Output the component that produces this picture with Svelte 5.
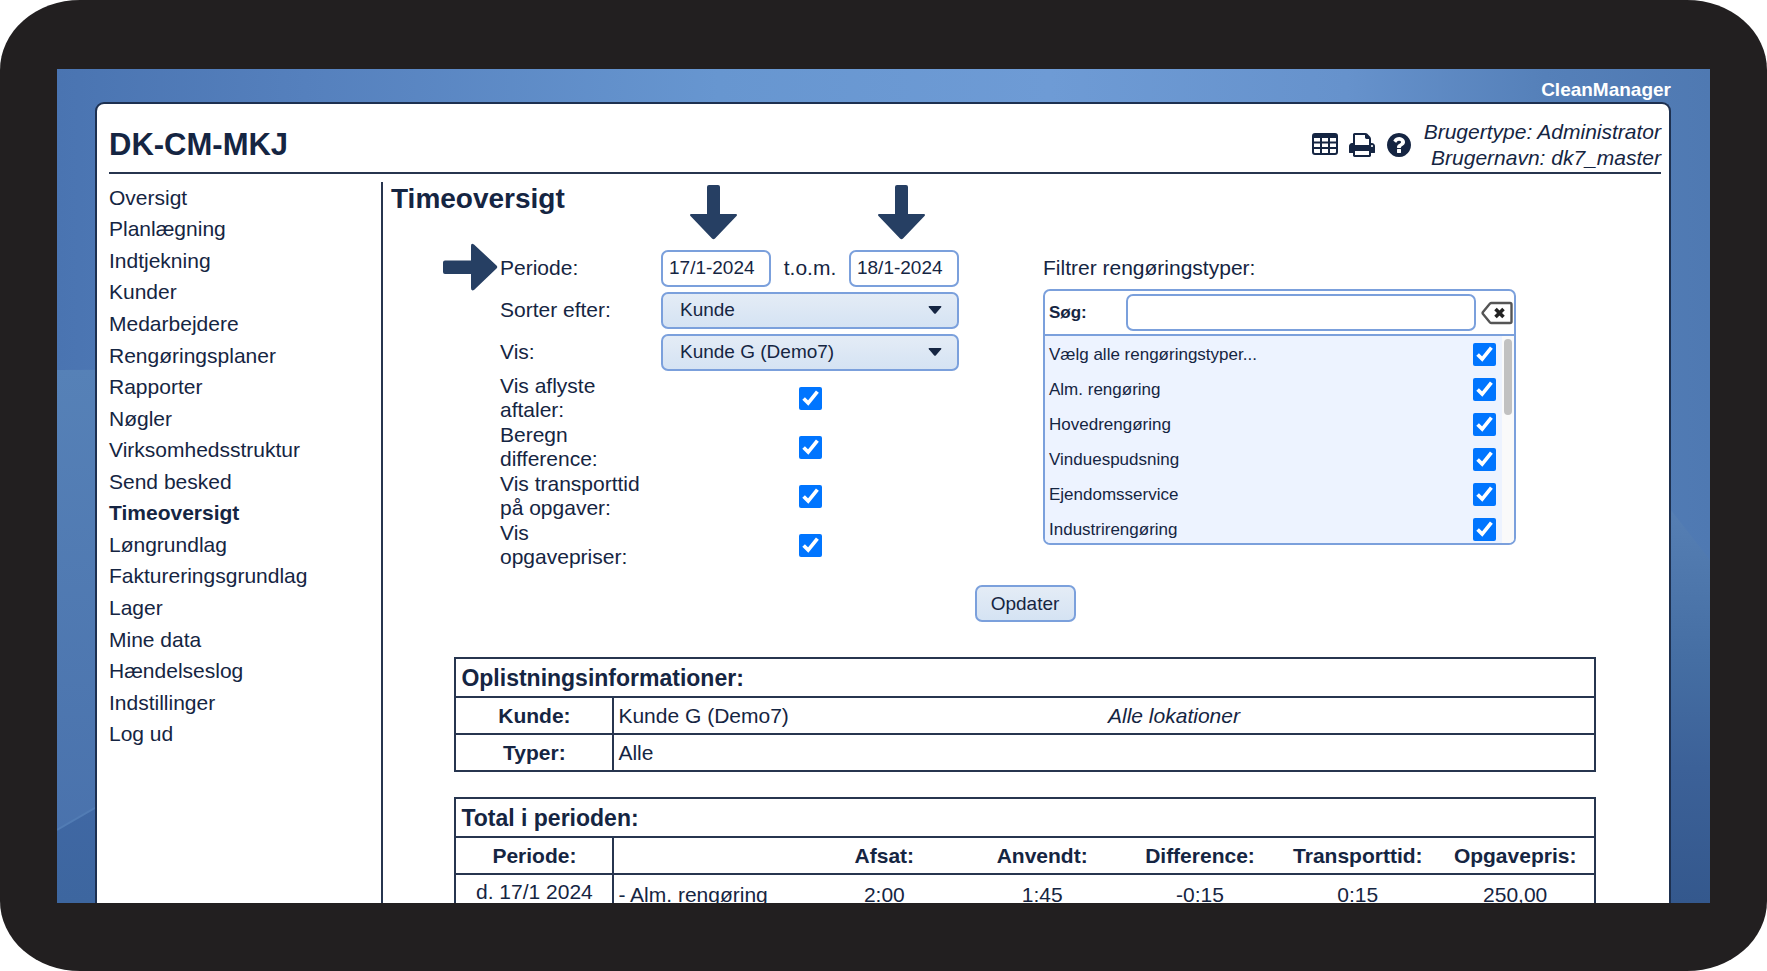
<script>
	const menu = [
		"Oversigt", "Planlægning", "Indtjekning", "Kunder", "Medarbejdere", "Rengøringsplaner",
		"Rapporter", "Nøgler", "Virksomhedsstruktur", "Send besked", "Timeoversigt", "Løngrundlag",
		"Faktureringsgrundlag", "Lager", "Mine data", "Hændelseslog", "Indstillinger", "Log ud",
	];
	const active = "Timeoversigt";

	let from = $state("17/1-2024");
	let to = $state("18/1-2024");
	let search = $state("");

	let options = $state([
		{ id: "cancelled", label: "Vis aflyste aftaler:", on: true },
		{ id: "difference", label: "Beregn difference:", on: true },
		{ id: "transport", label: "Vis transporttid på opgaver:", on: true },
		{ id: "prices", label: "Vis opgavepriser:", on: true },
	]);

	let types = $state([
		{ label: "Vælg alle rengøringstyper...", on: true },
		{ label: "Alm. rengøring", on: true },
		{ label: "Hovedrengøring", on: true },
		{ label: "Vinduespudsning", on: true },
		{ label: "Ejendomsservice", on: true },
		{ label: "Industrirengøring", on: true },
	]);

	// the first entry toggles all the others
	function toggleType(i) {
		if (i !== 0) return;
		for (const t of types) t.on = types[0].on;
	}

	const columns = ["Afsat:", "Anvendt:", "Difference:", "Transporttid:", "Opgavepris:"];
	const totals = [
		{ date: "d. 17/1 2024", type: "- Alm. rengøring", values: ["2:00", "1:45", "-0:15", "0:15", "250,00"] },
	];
</script>

{#snippet downArrow()}
	<svg class="arrow down" viewBox="0 0 49 56" aria-hidden="true">
		<path d="M20 1h9q2 0 2 2v27h15.500q2.500 0 1 2L26 54.500q-1.500 1.500-3 0L1.500 32q-1.500-2 1-2H18V3q0-2 2-2z" />
	</svg>
{/snippet}

{#snippet caret()}
	<svg class="caret" viewBox="0 0 14 8" aria-hidden="true"><path d="M1.500 0h11q1.500 0 .6 1.300L8 7.200q-1 1-2 0L.9 1.300Q0 0 1.500 0z" /></svg>
{/snippet}

<div class="device">
	<div class="screen">
		<svg class="backdrop" viewBox="0 0 1653 834" preserveAspectRatio="none" aria-hidden="true">
			<defs>
				<linearGradient id="top">
					<stop offset="0" stop-color="#4a74b1" />
					<stop offset=".15" stop-color="#5580bd" />
					<stop offset=".4" stop-color="#6796d0" />
					<stop offset=".6" stop-color="#6e9bd5" />
					<stop offset=".78" stop-color="#6692cc" />
					<stop offset=".9" stop-color="#5580b9" />
					<stop offset="1" stop-color="#4f79b2" />
				</linearGradient>
				<linearGradient id="left" x2="0" y2="1">
					<stop offset="0" stop-color="#5681b7" />
					<stop offset="1" stop-color="#4870ab" />
				</linearGradient>
				<linearGradient id="corner" x2="0" y2="1">
					<stop offset="0" stop-color="#4269a8" />
					<stop offset="1" stop-color="#3d669f" />
				</linearGradient>
				<linearGradient id="right" x2="0" y2="1">
					<stop offset=".27" stop-color="#567fb4" />
					<stop offset=".55" stop-color="#456ea3" />
					<stop offset=".75" stop-color="#3c6198" />
					<stop offset="1" stop-color="#34588d" />
				</linearGradient>
			</defs>
			<path fill="url(#top)" d="M0 0h1653v834H0z" />
			<path fill="url(#left)" d="M0 301l400-2v535H0z" />
			<path fill="url(#corner)" d="M0 761l200-116v189H0z" />
			<path stroke="#527cb4" stroke-width="2" d="M0 761l200-116" />
			<path fill="url(#right)" d="M1500 295l153 196v343h-153z" />
		</svg>

		<div class="brand">CleanManager</div>

		<div class="window">
			<header>
				<h1>DK-CM-MKJ</h1>
				<div class="tools">
					<button type="button" aria-label="Tabel">
						<svg viewBox="0 0 28 28"><path fill-rule="evenodd" d="M4 2h20q3 0 3 3v16q0 3-3 3H4q-3 0-3-3V5q0-3 3-3zM3 7v3.500h6V7zm8 0v3.500h6V7zm8 0v3.500h6V7zM3 12.500V16h6v-3.500zm8 0V16h6v-3.500zm8 0V16h6v-3.500zM3 18v3q0 1 1 1h5v-4zm8 0v4h6v-4zm8 0v4h5q1 0 1-1v-3z" /></svg>
					</button>
					<button type="button" aria-label="Udskriv">
						<svg viewBox="0 0 1792 1792"><path d="M448 1536h896v-256h-896v256zm0-640h896v-384h-160q-40 0-68-28t-28-68v-160h-640v640zm1152 64q0-26-19-45t-45-19-45 19-19 45 19 45 45 19 45-19 19-45zm128 0v416q0 13-9.500 22.500t-22.500 9.500h-224v160q0 40-28 68t-68 28h-960q-40 0-68-28t-28-68v-160h-224q-13 0-22.500-9.500t-9.500-22.500v-416q0-79 56.500-135.500t135.500-56.500h64v-544q0-40 28-68t68-28h672q40 0 88 20t76 48l152 152q28 28 48 76t20 88v256h64q79 0 135.500 56.500t56.500 135.500z" /></svg>
					</button>
					<button type="button" aria-label="Hjælp">
						<svg viewBox="0 0 1792 1792"><path d="M1024 1376v-192q0-14-9-23t-23-9h-192q-14 0-23 9t-9 23v192q0 14 9 23t23 9h192q14 0 23-9t9-23zm256-672q0-88-55.500-163t-138.500-116-170-41q-243 0-371 213-15 24 8 42l132 100q7 6 19 6 16 0 25-12 53-68 86-92 34-24 86-24 48 0 85.500 26t37.500 59q0 38-20 61t-68 45q-63 28-115.500 86.500t-52.500 125.500v36q0 14 9 23t23 9h192q14 0 23-9t9-23q0-19 21.500-49.500t54.500-49.500q32-18 49-28.500t46-35 44.500-48 28-60.500 12.500-81zm384 192q0 209-103 385.500t-279.500 279.500-385.500 103-385.500-103-279.500-279.500-103-385.500 103-385.500 279.500-279.500 385.500-103 385.500 103 279.500 279.500 103 385.500z" /></svg>
					</button>
				</div>
				<div class="user">
					<div>Brugertype: Administrator</div>
					<div>Brugernavn: dk7_master</div>
				</div>
			</header>

			<div class="body">
				<nav>
					<ul>
						{#each menu as item}
							<li><a href="#top" class:active={item === active}>{item}</a></li>
						{/each}
					</ul>
				</nav>

				<main>
					<h2>Timeoversigt</h2>

					<form onsubmit={(e) => e.preventDefault()}>
						<div class="columns">
							<div class="fields">
								<label class="pointed" for="from">
									<svg class="arrow side" viewBox="0 0 55 48" aria-hidden="true">
										<path d="M2 17.500h26V3q0-3.500 3-1.500l22.500 21q1.500 1.500 0 3L31 47q-3 1.500-3-2V31H2q-2 0-2-2v-9.500q0-2 2-2z" />
									</svg>
									Periode:
								</label>
								<div class="period">
									<span class="date">
										{@render downArrow()}
										<input id="from" type="text" bind:value={from} />
									</span>
									<label for="to">t.o.m.</label>
									<span class="date">
										{@render downArrow()}
										<input id="to" type="text" bind:value={to} />
									</span>
								</div>

								<label for="sort">Sorter efter:</label>
								<div class="select">
									<select id="sort"><option>Kunde</option></select>
									{@render caret()}
								</div>

								<label for="show">Vis:</label>
								<div class="select">
									<select id="show"><option>Kunde G (Demo7)</option></select>
									{@render caret()}
								</div>

								{#each options as option}
									<label for={option.id}>{option.label}</label>
									<div class="check"><input id={option.id} type="checkbox" bind:checked={option.on} /></div>
								{/each}
							</div>

							<div class="filter">
								<div class="caption">Filtrer rengøringstyper:</div>
								<div class="box">
									<div class="search">
										<label for="search">Søg:</label>
										<input id="search" type="text" bind:value={search} />
										<button type="button" aria-label="Ryd" onclick={() => search = ""}>
											<svg viewBox="0 0 32 24">
												<path d="M10.500 2H29q1.500 0 1.500 1.500v17Q30.500 22 29 22H10.500q-1 0-1.700-.8L2 13q-.8-1 0-2l6.800-8.200q.7-.8 1.700-.8z" fill="#fff" stroke="#555" stroke-width="2.400" />
												<path d="M14.500 8l8 8m0-8l-8 8" stroke="#222" stroke-width="3.600" />
											</svg>
										</button>
									</div>
									<div class="list">
										<ul>
											{#each types as type, i}
												<li>
													<label for="type-{i}">{type.label}</label>
													<input id="type-{i}" type="checkbox" bind:checked={type.on} onchange={() => toggleType(i)} />
												</li>
											{/each}
										</ul>
										<div class="track"><div class="thumb"></div></div>
									</div>
								</div>
							</div>
						</div>

						<button class="update" type="submit">Opdater</button>
					</form>

					<table>
						<colgroup><col class="first" /><col /><col /></colgroup>
						<tbody>
							<tr class="title"><th colspan="3">Oplistningsinformationer:</th></tr>
							<tr><th>Kunde:</th><td>Kunde G (Demo7)</td><td><em>Alle lokationer</em></td></tr>
							<tr><th>Typer:</th><td colspan="2">Alle</td></tr>
						</tbody>
					</table>

					<table>
						<colgroup>
							<col class="first" /><col class="type" />
							{#each columns as _}<col />{/each}
						</colgroup>
						<tbody>
							<tr class="title"><th colspan="7">Total i perioden:</th></tr>
							<tr>
								<th>Periode:</th>
								<th></th>
								{#each columns as column}<th>{column}</th>{/each}
							</tr>
							{#each totals as row}
								<tr class="values">
									<td class="day">{row.date}</td>
									<td>{row.type}</td>
									{#each row.values as value}<td class="num">{value}</td>{/each}
								</tr>
							{/each}
						</tbody>
					</table>
				</main>
			</div>
		</div>
	</div>
</div>

<style>
	:global(body) {
		background: #fff;
	}
	.device {
		--ink: #152542;
		--line: #27354f;
		--edge: #7ba0dc;
		box-sizing: border-box;
		height: 100vh;
		padding: 69px 57px 68px;
		background: #221f20;
		border-radius: 80px / 70px;
		color: var(--ink);
		font: 21px/24px "Liberation Sans", Arial, sans-serif;
	}
	.device * {
		box-sizing: border-box;
	}
	.screen {
		position: relative;
		display: flex;
		flex-direction: column;
		height: 100%;
		padding: 0 39px 0 38px;
		overflow: hidden;
	}
	.backdrop {
		position: absolute;
		inset: 0;
		width: 100%;
		height: 100%;
	}
	.brand {
		position: relative;
		padding-top: 9px;
		color: #fff;
		font-size: 19px;
		font-weight: bold;
		text-align: right;
	}
	.window {
		position: relative;
		display: flex;
		flex-direction: column;
		flex: 1;
		min-height: 0;
		padding: 0 8px 0 12px;
		background: #fff;
		border: 2px solid #1d3050;
		border-bottom: 0;
		border-radius: 9px 9px 0 0;
	}

	header {
		display: flex;
		align-items: center;
		flex-shrink: 0;
		padding: 15px 0 1px;
		border-bottom: 2px solid var(--line);
	}
	h1 {
		margin: 0 auto 0 0;
		font-size: 31px;
		line-height: 32px;
	}
	.tools {
		display: flex;
		gap: 9px;
		margin-right: 11px;
	}
	button {
		padding: 0;
		border: 0;
		background: none;
		color: inherit;
		font: inherit;
		cursor: pointer;
	}
	.tools button {
		height: 28px;
	}
	.tools svg {
		display: block;
		width: 28px;
		height: 28px;
		fill: var(--ink);
	}
	.user {
		font-style: italic;
		line-height: 26px;
		text-align: right;
	}

	.body {
		display: flex;
		flex: 1;
		min-height: 0;
		margin-top: 8px;
	}
	nav {
		flex: 0 0 274px;
		border-right: 2px solid var(--line);
	}
	ul {
		margin: 0;
		padding: 0;
		list-style: none;
	}
	nav ul {
		display: grid;
		grid-auto-rows: 1fr;
		align-items: center;
		height: 568px;
	}
	nav a {
		color: inherit;
		text-decoration: none;
	}
	nav a:hover {
		text-decoration: underline;
	}
	nav a.active {
		font-weight: bold;
	}

	main {
		flex: 1;
		min-width: 0;
		padding: 0 2px 0 8px;
	}
	h2 {
		margin: 1px 0 32px;
		font-size: 28px;
		line-height: 32px;
	}
	form {
		display: flex;
		flex-direction: column;
	}
	.columns {
		display: flex;
		align-items: flex-start;
		gap: 84px;
		margin-left: 109px;
	}
	.fields {
		display: grid;
		grid-template-columns: 161px 298px;
		grid-template-rows: repeat(3, 42px);
		grid-auto-rows: 49px;
		align-items: center;
	}
	.pointed,
	.date,
	.select {
		position: relative;
	}
	.arrow {
		position: absolute;
		fill: #263f63;
	}
	.arrow.side {
		left: -57px;
		top: -13px;
		width: 55px;
		height: 48px;
	}
	.arrow.down {
		left: 28px;
		bottom: 47px;
		width: 49px;
		height: 56px;
	}
	.period {
		display: flex;
		align-items: center;
		justify-content: space-between;
	}
	.date {
		width: 110px;
	}
	input[type="text"],
	select,
	.update {
		display: block;
		width: 100%;
		height: 37px;
		border: 2px solid var(--edge);
		border-radius: 7px;
		background: #fff;
		color: inherit;
		font: 19px/24px "Liberation Sans", Arial, sans-serif;
	}
	input[type="text"] {
		padding: 0 6px;
	}
	select,
	.update {
		background: linear-gradient(#e4ecf6, #d5e3f3);
	}
	select {
		padding: 0 36px 0 17px;
		appearance: none;
	}
	.caret {
		position: absolute;
		right: 17px;
		top: 14px;
		width: 14px;
		height: 8px;
		fill: var(--ink);
		pointer-events: none;
	}
	input[type="checkbox"] {
		display: block;
		flex: none;
		width: 23px;
		height: 23px;
		margin: 0;
	}
	.check {
		display: flex;
		justify-content: center;
		padding-top: 2px;
	}
	.update {
		align-self: center;
		width: 101px;
		margin: 16px 0 35px;
	}

	.filter {
		flex: 0 1 473px;
	}
	.caption {
		line-height: 42px;
	}
	.box {
		border: 2px solid var(--edge);
		border-radius: 7px;
		overflow: hidden;
		font-size: 17px;
	}
	.search {
		display: flex;
		align-items: center;
		height: 45px;
		padding: 0 1px 0 4px;
		border-bottom: 2px solid var(--edge);
	}
	.search label {
		flex: 0 0 77px;
		font-weight: bold;
	}
	.search input {
		flex: 1;
		min-width: 0;
	}
	.search button {
		margin-left: 5px;
	}
	.search svg {
		display: block;
		width: 32px;
		height: 24px;
	}
	.list {
		display: flex;
		height: 207px;
		overflow: hidden;
		background: #edf3ff;
	}
	.list ul {
		flex: 1;
		padding-top: 1px;
	}
	.list li {
		display: flex;
		align-items: center;
		justify-content: space-between;
		height: 35px;
		padding: 0 6px 0 4px;
	}
	.track {
		width: 12px;
		padding: 3px 2px;
		background: #fafafa;
	}
	.thumb {
		height: 76px;
		border-radius: 4px;
		background: #c1c1c1;
	}

	table {
		width: 90%;
		margin: 0 auto 25px;
		border: 2px solid var(--line);
		border-collapse: collapse;
		table-layout: fixed;
	}
	.first {
		width: 158px;
	}
	.type {
		width: 192px;
	}
	tr {
		height: 37px;
		border-bottom: 2px solid var(--line);
	}
	th,
	td {
		padding: 0 4px;
	}
	td {
		text-align: left;
	}
	th:first-child:not([colspan]),
	.day {
		border-right: 2px solid var(--line);
	}
	.title {
		height: 39px;
	}
	.title th {
		padding-left: 5px;
		font-size: 23px;
		text-align: left;
	}
	.values {
		height: 60px;
	}
	.values td {
		padding-top: 8px;
		vertical-align: top;
	}
	.values .day {
		padding-top: 5px;
	}
	.day,
	.values .num {
		text-align: center;
	}
</style>
